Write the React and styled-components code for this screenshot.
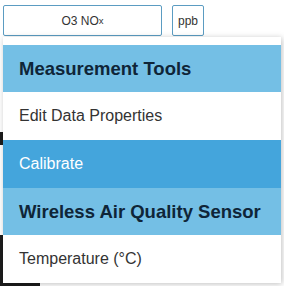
import React from 'react';
import styled, { createGlobalStyle } from 'styled-components';

const GlobalStyle = createGlobalStyle`
  html, body {
    margin: 0;
    padding: 0;
    background: #fff;
  }
  body {
    font-family: "Liberation Sans", Arial, sans-serif;
  }
`;

const sections = [
  {
    title: 'Measurement Tools',
    items: [
      { label: 'Edit Data Properties' },
      { label: 'Calibrate', active: true },
    ],
  },
  {
    title: 'Wireless Air Quality Sensor',
    items: [{ label: 'Temperature (°C)' }],
  },
];

class App extends React.Component {
  render() {
    return (
      <Page>
        <GlobalStyle />
        <Toolbar>
          <Field>
            O3 NO<small>x</small>
          </Field>
          <UnitButton>ppb</UnitButton>
        </Toolbar>
        <Backdrop>
          <DarkBar $top={96} $width={40} />
          <DarkBar $top={90} $width={40} $grow />
        </Backdrop>
        <Menu>
          {sections.map((s) => (
            <React.Fragment key={s.title}>
              <Header>{s.title}</Header>
              {s.items.map((it) => (
                <Item key={it.label} $active={it.active}>
                  {it.label}
                </Item>
              ))}
            </React.Fragment>
          ))}
        </Menu>
      </Page>
    );
  }
}

const Page = styled.div`
  position: relative;
  width: 284px;
  height: 286px;
  overflow: hidden;
  display: flex;
  flex-direction: column;
`;

const Toolbar = styled.div`
  display: flex;
  gap: 10px;
  padding: 5px 0 0 3px;
  height: 31px;
  box-sizing: content-box;
`;

const Field = styled.div`
  width: 159px;
  box-sizing: border-box;
  border: 1px solid #5b9cc2;
  border-radius: 2px;
  display: flex;
  align-items: center;
  justify-content: center;
  font-size: 12px;
  color: #333;
  small {
    font-size: 9.5px;
  }
`;

const UnitButton = styled.div`
  width: 32px;
  box-sizing: border-box;
  border: 1px solid #5b9cc2;
  border-radius: 2px;
  display: flex;
  align-items: center;
  justify-content: center;
  font-size: 12px;
  color: #333;
`;

const Backdrop = styled.div`
  flex: 1;
  display: flex;
  flex-direction: column;
`;

const DarkBar = styled.div`
  margin-top: ${(p) => p.$top}px;
  width: ${(p) => p.$width}px;
  height: ${(p) => (p.$grow ? 'auto' : '13px')};
  flex: ${(p) => (p.$grow ? 1 : 'none')};
  background: #1c1c1c;
`;

const Menu = styled.div`
  position: absolute;
  top: 37px;
  left: 3px;
  width: 278px;
  padding-top: 8px;
  background: #fff;
  box-shadow: 1px 1px 6px rgba(0, 0, 0, 0.25);
`;

const Header = styled.div`
  background: #74bfe5;
  color: #0f2538;
  font-weight: 700;
  font-size: 18.5px;
  line-height: 23px;
  padding: 12px 16px;
  white-space: nowrap;
`;

const Item = styled.div`
  background: ${(p) => (p.$active ? '#44a5dc' : '#fff')};
  color: ${(p) => (p.$active ? '#fff' : '#333')};
  font-size: 16px;
  line-height: 24px;
  padding: 12px 16px;
`;

export default App;
